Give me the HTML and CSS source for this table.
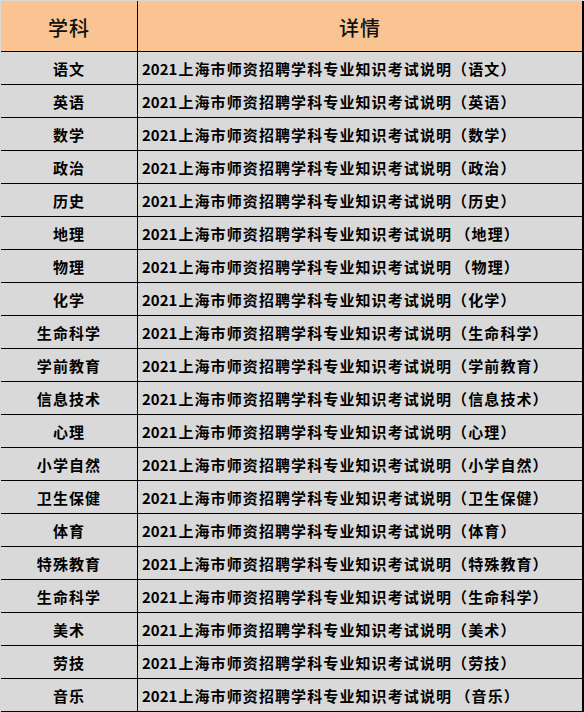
FILE: index.html
```html
<!DOCTYPE html>
<html lang="zh-CN">
<head>
<meta charset="utf-8">
<title>学科详情</title>
<link rel="stylesheet" href="styles.css">
</head>
<body>
<div class="sheet">
  <div class="row head">
    <div class="c1">学科</div>
    <div class="c2">详情</div>
  </div>
  <div class="row"><div class="c1">语文</div><div class="c2"><span class="yr">2021</span>上海市师资招聘学科专业知识考试说明（语文）</div></div>
  <div class="row"><div class="c1">英语</div><div class="c2"><span class="yr">2021</span>上海市师资招聘学科专业知识考试说明（英语）</div></div>
  <div class="row"><div class="c1">数学</div><div class="c2"><span class="yr">2021</span>上海市师资招聘学科专业知识考试说明（数学）</div></div>
  <div class="row"><div class="c1">政治</div><div class="c2"><span class="yr">2021</span>上海市师资招聘学科专业知识考试说明（政治）</div></div>
  <div class="row"><div class="c1">历史</div><div class="c2"><span class="yr">2021</span>上海市师资招聘学科专业知识考试说明（历史）</div></div>
  <div class="row"><div class="c1">地理</div><div class="c2"><span class="yr">2021</span>上海市师资招聘学科专业知识考试说明<span class="sp"> </span>（地理）</div></div>
  <div class="row"><div class="c1">物理</div><div class="c2"><span class="yr">2021</span>上海市师资招聘学科专业知识考试说明<span class="sp"> </span>（物理）</div></div>
  <div class="row"><div class="c1">化学</div><div class="c2"><span class="yr">2021</span>上海市师资招聘学科专业知识考试说明（化学）</div></div>
  <div class="row"><div class="c1">生命科学</div><div class="c2"><span class="yr">2021</span>上海市师资招聘学科专业知识考试说明（生命科学）</div></div>
  <div class="row"><div class="c1">学前教育</div><div class="c2"><span class="yr">2021</span>上海市师资招聘学科专业知识考试说明（学前教育）</div></div>
  <div class="row"><div class="c1">信息技术</div><div class="c2"><span class="yr">2021</span>上海市师资招聘学科专业知识考试说明（信息技术）</div></div>
  <div class="row"><div class="c1">心理</div><div class="c2"><span class="yr">2021</span>上海市师资招聘学科专业知识考试说明（心理）</div></div>
  <div class="row"><div class="c1">小学自然</div><div class="c2"><span class="yr">2021</span>上海市师资招聘学科专业知识考试说明（小学自然）</div></div>
  <div class="row"><div class="c1">卫生保健</div><div class="c2"><span class="yr">2021</span>上海市师资招聘学科专业知识考试说明（卫生保健）</div></div>
  <div class="row"><div class="c1">体育</div><div class="c2"><span class="yr">2021</span>上海市师资招聘学科专业知识考试说明（体育）</div></div>
  <div class="row"><div class="c1">特殊教育</div><div class="c2"><span class="yr">2021</span>上海市师资招聘学科专业知识考试说明（特殊教育）</div></div>
  <div class="row"><div class="c1">生命科学</div><div class="c2"><span class="yr">2021</span>上海市师资招聘学科专业知识考试说明（生命科学）</div></div>
  <div class="row"><div class="c1">美术</div><div class="c2"><span class="yr">2021</span>上海市师资招聘学科专业知识考试说明（美术）</div></div>
  <div class="row"><div class="c1">劳技</div><div class="c2"><span class="yr">2021</span>上海市师资招聘学科专业知识考试说明（劳技）</div></div>
  <div class="row"><div class="c1">音乐</div><div class="c2"><span class="yr">2021</span>上海市师资招聘学科专业知识考试说明<span class="sp"> </span>（音乐）</div></div>
</div>
</body>
</html>
```
FILE: styles.css
```css
html, body {
  margin: 0;
  padding: 0;
  background: #d9d9d9;
}
body {
  font-family: "Noto Sans CJK SC", "Noto Sans", sans-serif;
  color: #000;
}
.sheet {
  width: 583px;
  margin: 1px 0 0 1px;
  border-right: 2px solid #000;
  box-sizing: border-box;
}
.row {
  display: flex;
  height: 33px;
  border-bottom: 1px solid #000;
  box-sizing: border-box;
  background: #d9d9d9;
  font-size: 15px;
  font-weight: 700;
  letter-spacing: 1.1px;
  line-height: 1;
}
.row.head {
  height: 51px;
  background: #fac392;
  font-size: 20px;
  font-weight: 500;
  letter-spacing: 1px;
  color: #111;
}
.c1 {
  width: 137px;
  flex: none;
  box-sizing: border-box;
  border-right: 1px solid #000;
  display: flex;
  align-items: center;
  justify-content: center;
}
.c2 {
  flex: 1;
  display: flex;
  align-items: center;
  padding-left: 4px;
  white-space: pre;
}
.head .c1,
.head .c2 {
  padding-top: 3px;
}
.head .c2 {
  justify-content: center;
  padding-left: 0;
}
.yr {
  letter-spacing: 0;
  padding-right: 1px;
}
.sp {
  letter-spacing: 0;
}
```
